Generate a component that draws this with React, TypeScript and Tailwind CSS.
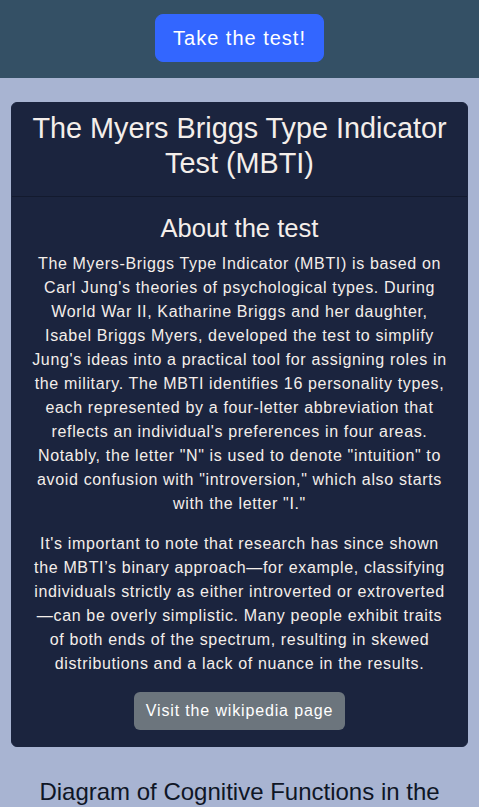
import React from 'react';

const para1 = [
  'The Myers-Briggs Type Indicator (MBTI) is based on',
  "Carl Jung's theories of psychological types. During",
  'World War II, Katharine Briggs and her daughter,',
  'Isabel Briggs Myers, developed the test to simplify',
  "Jung's ideas into a practical tool for assigning roles in",
  'the military. The MBTI identifies 16 personality types,',
  'each represented by a four-letter abbreviation that',
  "reflects an individual's preferences in four areas.",
  'Notably, the letter "N" is used to denote "intuition" to',
  'avoid confusion with "introversion," which also starts',
  'with the letter "I."',
];

const para2 = [
  "It's important to note that research has since shown",
  'the MBTI\u2019s binary approach\u2014for example, classifying',
  'individuals strictly as either introverted or extroverted',
  '\u2014can be overly simplistic. Many people exhibit traits',
  'of both ends of the spectrum, resulting in skewed',
  'distributions and a lack of nuance in the results.',
];

const Lines: React.FC<{ lines: string[] }> = ({ lines }) => (
  <>
    {lines.map((l, i) => (
      <React.Fragment key={i}>
        {l}
        {i < lines.length - 1 && <br />}
      </React.Fragment>
    ))}
  </>
);

const App: React.FC = () => {
  return (
    <div className="min-h-screen bg-[#a8b4d2] font-['Liberation_Sans',Arial,sans-serif]">
      {/* Top bar */}
      <div className="bg-[#345065] pt-[14px] pb-4 flex justify-center">
        <button className="bg-[#3366ff] text-white text-[20px] leading-[30px] px-[17px] py-2 border border-[#3366ff] rounded-lg tracking-[1px]">
          Take the test!
        </button>
      </div>

      <div className="px-[11px] pt-6">
        <div className="bg-[#1b243e] rounded-md border border-[#1b243e] text-[#f4eeea] text-center">
          <div className="px-4 pt-2 pb-2 border-b border-[#131a2e]">
            <h1 className="text-[28.8px] leading-[1.2] mb-2">The Myers Briggs Type Indicator Test (MBTI)</h1>
          </div>
          <div className="p-4">
            <h2 className="text-[25.6px] leading-[1.2] mb-2">About the test</h2>
            <div className="text-[16px] leading-6 tracking-[0.65px]">
              <p className="mb-4">
                <Lines lines={para1} />
              </p>
              <p className="mb-4">
                <Lines lines={para2} />
              </p>
              <button className="bg-[#6c757d] text-white px-3 py-[7px] leading-6 rounded-md tracking-[0.85px]">
                Visit the wikipedia page
              </button>
            </div>
          </div>
        </div>

        <h2 className="mt-[31px] text-[24px] leading-[1.2] text-[#0f1626] text-center pb-4">
          Diagram of Cognitive Functions in the MBTI
        </h2>
      </div>
    </div>
  );
};

export default App;
